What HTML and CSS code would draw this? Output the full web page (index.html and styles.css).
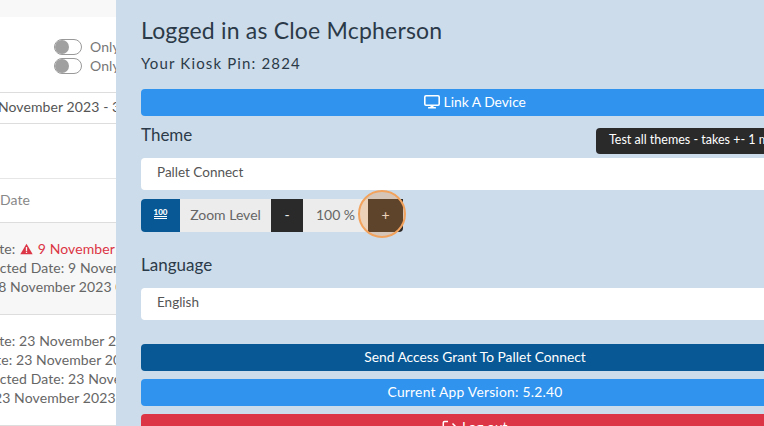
FILE: index.html

```html
<!DOCTYPE html>
<html lang="en">
<head>
  <meta charset="UTF-8">
  <title>Settings</title>
  <link rel="stylesheet" href="styles.css">
</head>
<body>

  <div class="list-pane">
    <div class="list-inner">
      <div class="top-strip"></div>
      <div class="filters">
        <div class="toggle-row"><span class="toggle"></span>Only</div>
        <div class="toggle-row"><span class="toggle"></span>Only</div>
      </div>
      <div class="date-range">9 November 2023 - 30 November 2023</div>
      <div class="table-head">Date</div>
      <div class="order-row shaded">
        <p class="line-due">Due Date: <svg class="warn" viewBox="0 0 16 14"><path d="M8 0.5 L15.6 13.5 H0.4 Z" fill="#dc3545"/><rect x="7.2" y="4.6" width="1.6" height="4.8" fill="#f7f7f7"/><rect x="7.2" y="10.3" width="1.6" height="1.6" fill="#f7f7f7"/></svg> <span class="late">9 November 2023</span></p>
        <p class="line-expected">Expected Date: 9 November 2023</p>
        <p class="line-created">28 November 2023 09:00</p>
      </div>
      <div class="order-row">
        <p class="line-due">Due Date: 23 November 2023</p>
        <p class="line-ship">Ship Date: 23 November 2023</p>
        <p class="line-expected">Expected Date: 23 November 2023</p>
        <p class="line-final">23 November 2023 09:00</p>
      </div>
    </div>
  </div>

  <div class="panel">
    <h1>Logged in as Cloe Mcpherson</h1>
    <div class="pin">Your Kiosk Pin: 2824</div>
    <button class="btn btn-blue">
      <svg class="btn-icon" viewBox="0 0 16 14"><rect x="0.8" y="0.8" width="14.4" height="9.4" rx="1.2" fill="none" stroke="#fff" stroke-width="1.6"/><rect x="6.5" y="10" width="3" height="2.4" fill="#fff"/><rect x="4" y="12" width="8" height="1.6" rx="0.6" fill="#fff"/></svg>
      Link A Device
    </button>

    <h2 class="theme-label">Theme</h2>
    <div class="select">Pallet Connect</div>
    <div class="tip">Test all themes - takes +- 1 minute</div>

    <div class="zoom-group">
      <span class="zoom-icon"><span class="hundred">100</span></span>
      <span class="zoom-text">Zoom Level</span>
      <span class="zoom-btn">-</span>
      <span class="zoom-value">100 %</span>
      <span class="zoom-btn plus">+</span>
      <span class="spot"></span>
    </div>

    <h2 class="lang-label">Language</h2>
    <div class="select">English</div>

    <button class="btn btn-navy first-action">Send Access Grant To Pallet Connect</button>
    <button class="btn btn-blue version">Current App Version: 5.2.40</button>
    <button class="btn btn-red">
      <svg class="btn-icon" viewBox="0 0 16 14"><path d="M6 1.5 H2.5 A1.2 1.2 0 0 0 1.3 2.7 V11.3 A1.2 1.2 0 0 0 2.5 12.5 H6" fill="none" stroke="#fff" stroke-width="1.5"/><path d="M5 7 H14 M10.5 3.5 L14 7 L10.5 10.5" fill="none" stroke="#fff" stroke-width="1.5"/></svg>
      Log out
    </button>
  </div>

</body>
</html>
```

FILE: styles.css

```css
html, body {
  height: 100%;
}

body {
  margin: 0;
  display: flex;
  height: 426px;
  overflow: hidden;
  background: #fff;
  font-family: 'Lato', 'Liberation Sans', sans-serif;
  color: #555;
}

.list-pane {
  width: 116px;
  flex: none;
  overflow: hidden;
}

.list-inner {
  width: 400px;
  margin-left: -40px;
  font-size: 14px;
  letter-spacing: 0.1px;
  white-space: nowrap;
}

.top-strip {
  height: 17px;
  background: #f8f8f8;
}

.filters {
  height: 75px;
  padding: 20px 0 0 94px;
  box-sizing: border-box;
}

.toggle-row {
  display: flex;
  align-items: center;
  gap: 8px;
  height: 19px;
  color: #777;
}

.toggle {
  width: 28px;
  height: 16px;
  border: 1px solid #999;
  border-radius: 8px;
  box-sizing: border-box;
}

.toggle::before {
  content: "";
  display: block;
  width: 14px;
  height: 14px;
  border-radius: 50%;
  background: #a0a0a0;
}

.date-range {
  height: 32px;
  line-height: 27px;
  box-sizing: border-box;
  border-top: 1px solid #ddd;
  border-bottom: 1px solid #ddd;
  padding-left: 26px;
}

.table-head {
  margin-top: 54px;
  height: 44px;
  line-height: 41px;
  box-sizing: border-box;
  border-top: 1px solid #e6e6e6;
  padding-left: 40px;
  color: #888;
}

.order-row {
  border-top: 1px solid #ddd;
  padding: 16px 0 0 0;
  height: 92px;
  box-sizing: border-box;
  color: #666;
}

.order-row:last-child {
  height: 112px;
  border-bottom: 1px solid #ddd;
}

.order-row.shaded {
  background: #f7f7f7;
}

.order-row p {
  margin: 0;
  height: 19px;
  line-height: 19px;
}

.order-row .line-due {
  margin-left: -8px;
}

.order-row .line-ship {
  margin-left: -12px;
}

.order-row .line-expected {
  margin-left: 9px;
}

.order-row .line-created {
  margin-left: 30px;
}

.order-row .line-final {
  margin-left: 34px;
}

.late {
  color: #dc3545;
}

.warn {
  width: 13px;
  height: 12px;
  margin: 0 1px;
  vertical-align: -1px;
}

.panel {
  width: 718px;
  flex: none;
  box-sizing: border-box;
  padding: 17px 25px 0;
  background: #cddceb;
  position: relative;
  color: #2b3a48;
}

h1 {
  margin: 0;
  font-size: 23px;
  font-weight: 400;
  line-height: 27px;
  letter-spacing: 0.2px;
}

.pin {
  margin-top: 9px;
  font-size: 15px;
  line-height: 20px;
  letter-spacing: 1.15px;
  margin-bottom: 16px;
}

h2 {
  margin: 0;
  font-size: 17px;
  font-weight: 400;
  line-height: 22px;
}

.theme-label {
  margin-top: 8px;
  margin-bottom: 12px;
}

.lang-label {
  margin-top: 22px;
  margin-bottom: 12px;
}

.btn {
  display: block;
  width: 100%;
  height: 27px;
  border: 0;
  border-radius: 4px;
  color: #fff;
  font-family: inherit;
  font-size: 13.8px;
  margin: 0;
  padding: 0 0 3px;
}

.btn + .btn {
  margin-top: 8px;
}

.btn-blue {
  background: #3094ef;
}

.btn-navy {
  background: #075895;
}

.btn-red {
  background: #dc3545;
}

.first-action {
  margin-top: 24px;
}

.version {
  letter-spacing: 0.25px;
}

.btn-icon {
  width: 16px;
  height: 14px;
  vertical-align: -2px;
}

.select {
  height: 32px;
  line-height: 29px;
  background: #fff;
  border-radius: 4px;
  padding-left: 16px;
  font-size: 13.5px;
  color: #555;
}

.tip {
  position: absolute;
  top: 128px;
  left: 480px;
  width: 240px;
  height: 26px;
  line-height: 23px;
  padding-left: 13px;
  box-sizing: border-box;
  background: #2a2a2a;
  border-radius: 4px;
  color: #fff;
  font-size: 12.5px;
  white-space: nowrap;
}

.zoom-group {
  display: flex;
  width: 262px;
  height: 33px;
  margin-top: 9px;
  background: #ececec;
  border-radius: 4px;
  position: relative;
  font-size: 14px;
  color: #666;
  line-height: 31px;
}

.zoom-icon {
  width: 39px;
  background: #075895;
  border-radius: 4px 0 0 4px;
  display: flex;
  justify-content: center;
}

.hundred {
  color: #fff;
  font-size: 8px;
  font-weight: 900;
  line-height: 8px;
  height: 8px;
  margin-top: 9px;
  border-bottom: 3px double #fff;
}

.zoom-text {
  width: 91px;
  text-align: center;
}

.zoom-value {
  width: 65px;
  text-align: center;
}

.zoom-btn {
  width: 32px;
  background: #2a2a2a;
  color: #eee;
  text-align: center;
}

.zoom-btn.plus {
  width: 35px;
  border-radius: 0 0 4px 0;
}

.spot {
  position: absolute;
  left: 217px;
  top: -9px;
  width: 48px;
  height: 48px;
  box-sizing: border-box;
  border: 2px solid #f2a35e;
  border-radius: 50%;
  background: rgba(240, 140, 50, 0.27);
}
```
